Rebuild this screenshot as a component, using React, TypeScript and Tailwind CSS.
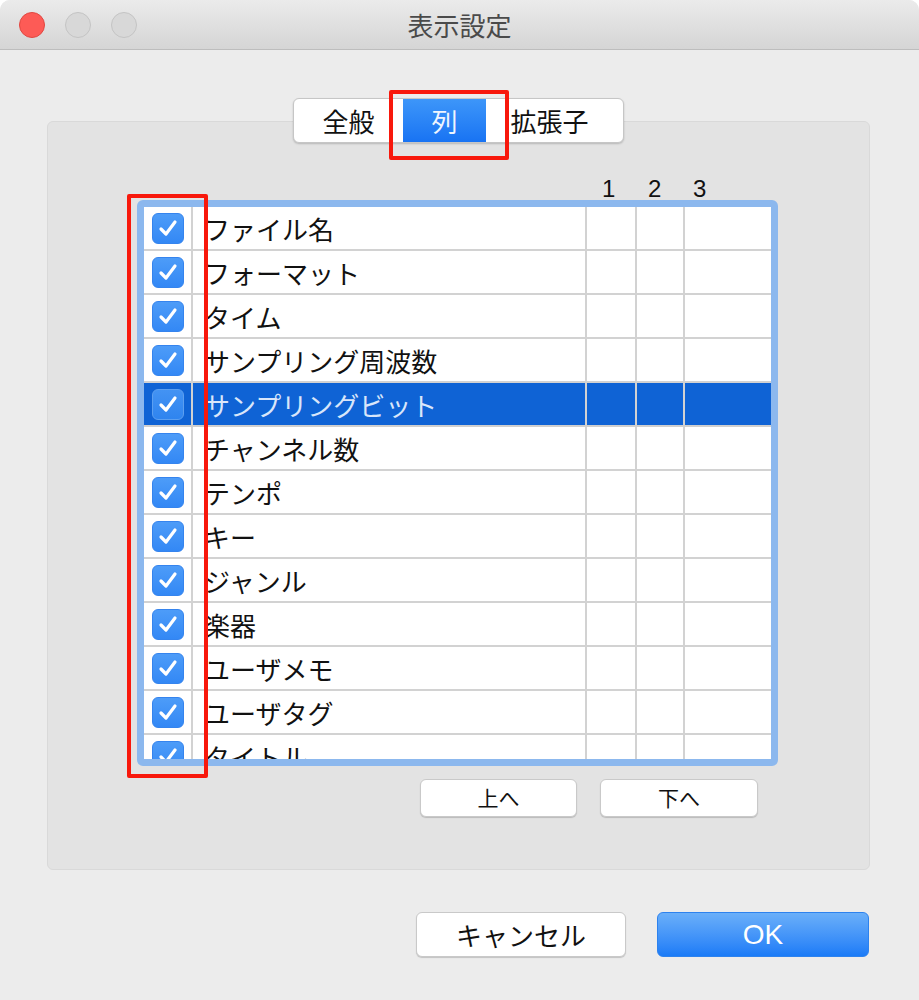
const jp = { fontFamily: '"Noto Sans CJK JP", "Noto Sans", sans-serif' };

const rows = [
  "ファイル名",
  "フォーマット",
  "タイム",
  "サンプリング周波数",
  "サンプリングビット",
  "チャンネル数",
  "テンポ",
  "キー",
  "ジャンル",
  "楽器",
  "ユーザメモ",
  "ユーザタグ",
  "タイトル",
];

function Check({ selected }: { selected?: boolean }) {
  return (
    <div
      className={
        selected
          ? "w-[32px] h-[31px] rounded-[6px] border border-[#5c9ff0] bg-gradient-to-b from-[#4393f3] to-[#2f84ef] flex items-center justify-center"
          : "w-[32px] h-[31px] rounded-[6px] border border-[#3584ee] bg-gradient-to-b from-[#4d9cf8] to-[#3388f5] flex items-center justify-center"
      }
    >
      <svg width="20" height="18" viewBox="0 0 20 18" fill="none">
        <path d="M3 10 L8 15 L17 3" stroke="white" strokeWidth="3.2" strokeLinecap="round" strokeLinejoin="round" />
      </svg>
    </div>
  );
}

function Row({ label, selected }: { label: string; selected?: boolean }) {
  return (
    <div className={selected ? "flex h-[44px] shrink-0 border-b-2 border-[#cfcfcf] bg-[#0f63d5]" : "flex h-[44px] shrink-0 border-b-2 border-[#d2d2d2]"}>
      <div className="w-[49px] border-r-2 border-[#d2d2d2] flex items-center justify-center">
        <Check selected={selected} />
      </div>
      <div
        className={selected ? "w-[394px] border-r-2 border-[#d2d2d2] pl-[11px] flex items-center text-[26px] text-[#d9e6fa] whitespace-nowrap" : "w-[394px] border-r-2 border-[#d2d2d2] pl-[11px] flex items-center text-[26px] text-[#111] whitespace-nowrap"}
        style={jp}
      >
        {label}
      </div>
      <div className="w-[50px] border-r-2 border-[#d2d2d2]" />
      <div className="w-[48px] border-r-2 border-[#d2d2d2]" />
      <div className="flex-1" />
    </div>
  );
}

function Btn({ children, className }: { children: React.ReactNode; className: string }) {
  return (
    <div
      className={"flex items-center justify-center bg-white border border-[#c9c9c9] rounded-[6px] shadow-[0_1px_1px_rgba(0,0,0,0.18)] text-[#111] " + className}
      style={jp}
    >
      {children}
    </div>
  );
}

export default function App() {
  return (
    <div className="relative w-[919px] h-[1000px] bg-white overflow-hidden">
      <div className="w-[919px] h-[1000px] bg-[#ececec] rounded-t-[10px] overflow-hidden flex flex-col">
        {/* title bar */}
        <div className="relative h-[50px] shrink-0 bg-gradient-to-b from-[#ebebeb] to-[#d5d5d5] border-b border-[#bdbdbd] flex items-center">
          <div className="flex gap-[20px] pl-[19px]">
            <div className="w-[26px] h-[26px] rounded-full bg-[#fd5b56] border border-[#e14640]" />
            <div className="w-[26px] h-[26px] rounded-full bg-[#d8d8d8] border border-[#c4c4c4]" />
            <div className="w-[26px] h-[26px] rounded-full bg-[#d8d8d8] border border-[#c4c4c4]" />
          </div>
          <div className="absolute inset-0 flex items-center justify-center text-[26px] text-[#4a4a4a]" style={jp}>
            表示設定
          </div>
        </div>

        {/* tabs */}
        <div className="relative z-10 flex justify-center pt-[48px] pr-[2px]">
          <div className="flex h-[45px] bg-white border border-[#c6c6c6] rounded-[6px] shadow-[0_1px_2px_rgba(0,0,0,0.2)] overflow-hidden text-[26px]" style={jp}>
            <div className="w-[109px] flex items-center justify-center text-[#111]">全般</div>
            <div className="w-[83px] flex items-center justify-center text-[#eef5ff] bg-gradient-to-b from-[#3d96f9] to-[#1873f3]">列</div>
            <div className="w-[137px] flex items-center justify-center pr-[10px] text-[#111]">拡張子</div>
          </div>
        </div>

        {/* group box */}
        <div className="ml-[47px] w-[823px] h-[749px] -mt-[22px] bg-[#e3e3e3] border border-[#d9d9d9] rounded-[6px] flex flex-col">
          <div className="h-[56px]" />
          <div className="flex h-[22px] ml-[539px] items-center text-[24px] text-[#111]" style={{ fontFamily: '"Liberation Sans", sans-serif' }}>
            <div className="w-[50px] pl-[15px]">1</div>
            <div className="w-[48px] pl-[11px]">2</div>
            <div className="pl-[8px]">3</div>
          </div>
          <div className="ml-[89px] w-[641px] h-[566px] border-[7px] border-[#8cb8ee] rounded-[6px] bg-white overflow-hidden flex flex-col">
            {rows.map((r, i) => (
              <Row key={r} label={r} selected={i === 4} />
            ))}
          </div>
          <div className="flex gap-[23px] ml-[372px] mt-[13px]">
            <Btn className="w-[157px] h-[38px] text-[21px]">上へ</Btn>
            <Btn className="w-[158px] h-[38px] text-[21px]">下へ</Btn>
          </div>
        </div>

        {/* bottom buttons */}
        <div className="flex justify-end gap-[31px] pr-[50px] pt-[42px]">
          <Btn className="w-[210px] h-[45px] text-[26px]">キャンセル</Btn>
          <div
            className="w-[212px] h-[45px] rounded-[6px] bg-gradient-to-b from-[#6aaff9] to-[#1a7bf7] border border-[#2d82ee] flex items-center justify-center text-[28px] text-white"
            style={{ fontFamily: '"Liberation Sans", sans-serif' }}
          >
            OK
          </div>
        </div>
      </div>

      {/* annotation highlights */}
      <div className="absolute left-[389px] top-[90px] w-[120px] h-[70px] border-[4px] border-[#f8180c] rounded-[2px] z-20" />
      <div className="absolute left-[127px] top-[194px] w-[81px] h-[584px] border-[4px] border-[#f8180c] rounded-[2px] z-20" />
    </div>
  );
}
